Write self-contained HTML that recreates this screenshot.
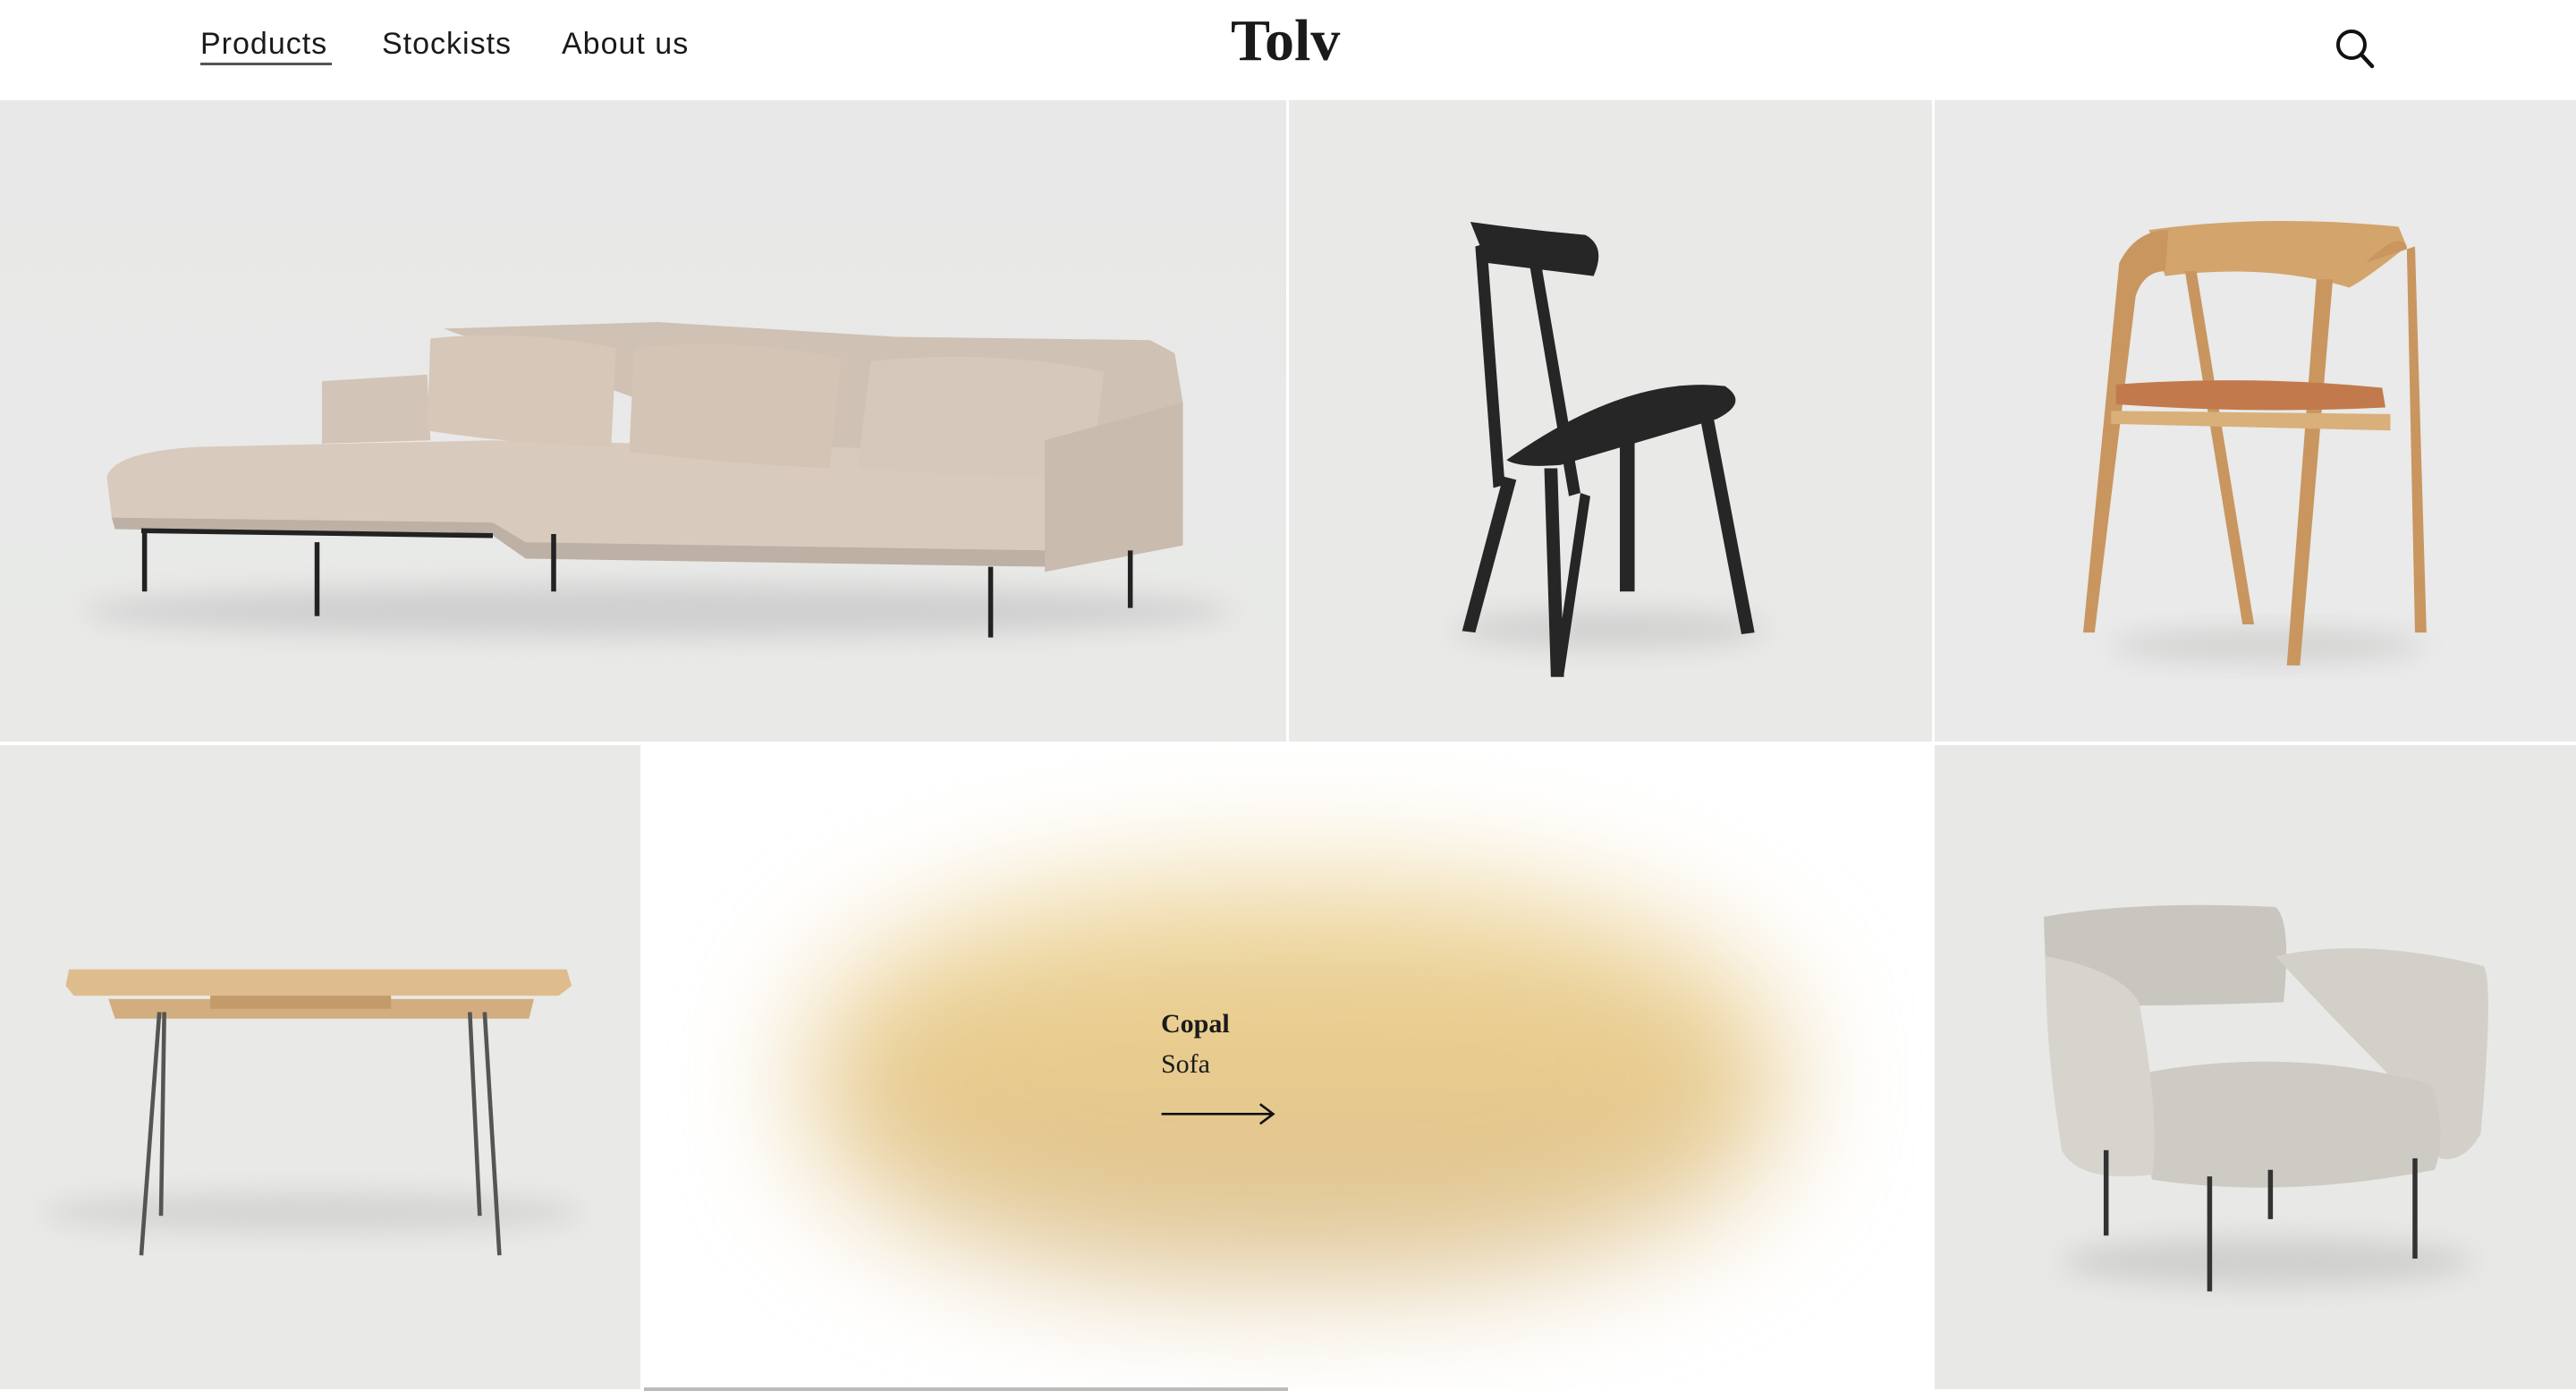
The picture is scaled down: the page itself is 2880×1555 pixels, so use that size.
<!DOCTYPE html>
<html><head><meta charset="utf-8">
<style>
*{margin:0;padding:0;box-sizing:border-box}
html,body{width:2880px;height:1555px;overflow:hidden;background:#fff;font-family:"Liberation Sans",sans-serif}
.hdr{position:absolute;left:0;top:0;width:2880px;height:112px;background:#fff}
.nav{position:absolute;top:30px;font-size:34px;color:#1a1a1a;letter-spacing:1px}
.logo{position:absolute;left:1376px;top:8px;font-family:"Liberation Serif",serif;font-weight:bold;font-size:66px;color:#1a1a1a}
.cell{position:absolute;overflow:hidden}
svg.art{position:absolute;left:0;top:0}
.txt{position:absolute;font-family:"Liberation Serif",serif;color:#1a1a1a}
</style></head><body>
<div class="hdr">
 <div class="nav" style="left:224px">Products</div>
 <div style="position:absolute;left:224px;top:70px;width:147px;height:3px;background:#555"></div>
 <div class="nav" style="left:427px">Stockists</div>
 <div class="nav" style="left:628px">About us</div>
 <div class="logo">Tolv</div>
 <svg style="position:absolute;left:2610px;top:30px" width="46" height="50" viewBox="0 0 46 50"><circle cx="19" cy="20" r="15" fill="none" stroke="#111" stroke-width="4"/><line x1="30" y1="31" x2="42" y2="44" stroke="#111" stroke-width="4.5" stroke-linecap="round"/></svg>
</div>
<div class="cell" style="left:0;top:112px;width:1438px;height:717px;background:linear-gradient(180deg,#e7e8e7,#e9eae8)"></div>
<div class="cell" style="left:1441px;top:112px;width:719px;height:717px;background:#e9e9e8"></div>
<div class="cell" style="left:2163px;top:112px;width:717px;height:717px;background:#e9eae9"></div>
<div class="cell" style="left:0;top:833px;width:716px;height:720px;background:#e9e9e8"></div>
<div class="cell" style="left:717px;top:833px;width:1444px;height:720px;background:#fff">
 <div style="position:absolute;left:190px;top:150px;width:1080px;height:450px;border-radius:45%;background:linear-gradient(180deg,#efd8a0,#e7c98a 50%,#dcc49a);filter:blur(70px)"></div>
</div>
<div class="cell" style="left:2163px;top:833px;width:717px;height:720px;background:#e8e8e7"></div>
<div style="position:absolute;left:720px;top:1551px;width:720px;height:4px;background:#bbb"></div>

<svg class="art" width="2880" height="1555" viewBox="0 0 1568 846.6">
 <defs><filter id="b" x="-50%" y="-50%" width="200%" height="200%"><feGaussianBlur stdDeviation="8"/></filter></defs>
 <ellipse cx="400" cy="372" rx="350" ry="16" fill="#cfd0cf" filter="url(#b)"/>
 <g fill="#d8cabd">
  <path d="M270 200 L400 196 L545 205 L700 207 L715 215 L720 245 L720 330 L640 340 L640 300 L560 305 Z" fill="#cfc1b3"/>
  <path d="M196 232 L260 228 L262 268 L196 270 Z" fill="#d2c4b6"/>
  <path d="M65 290 Q70 275 120 272 L300 268 L640 275 L640 335 L320 330 L300 318 L68 315 Z"/>
  <path d="M68 315 L300 318 L320 330 L640 335 L640 345 L320 340 L300 326 L70 322 Z" fill="#bdb0a4"/>
  <path d="M262 206 Q320 200 375 212 L372 272 Q310 270 260 262 Z" fill="#d6c7b9"/>
  <path d="M386 212 Q450 205 512 218 L505 285 Q440 282 383 275 Z" fill="#d3c4b6"/>
  <path d="M530 220 Q600 212 672 226 L664 292 Q590 290 522 285 Z" fill="#d6c8ba"/>
  <path d="M636 268 L720 245 L720 332 L636 348 Z" fill="#c9bbad"/>
 </g>
 <g stroke="#222" stroke-width="3">
  <line x1="88" y1="322" x2="88" y2="360"/><line x1="193" y1="330" x2="193" y2="375"/>
  <line x1="337" y1="325" x2="337" y2="360"/><line x1="603" y1="345" x2="603" y2="388"/>
  <line x1="688" y1="335" x2="688" y2="370"/><line x1="86" y1="323" x2="300" y2="326"/>
 </g>
 <ellipse cx="980" cy="383" rx="95" ry="12" fill="#d2d2d1" filter="url(#b)"/>
 <g fill="#262626">
  <path d="M895 135 Q930 140 965 143 Q978 150 970 168 L905 160 Z"/>
  <path d="M898 150 L905 148 L916 295 L909 297 Z"/>
  <path d="M930 155 L937 154 L962 300 L955 302 Z"/>
  <path d="M917 280 Q990 228 1050 235 Q1065 245 1045 255 L950 283 Q925 285 917 280 Z"/>
  <path d="M940 285 L948 285 L952 412 L944 412 Z"/>
  <path d="M986 262 L995 262 L995 360 L986 360 Z"/>
  <path d="M1035 255 L1043 254 L1068 385 L1060 386 Z"/>
  <path d="M915 290 L923 292 L898 385 L890 384 Z"/>
  <path d="M962 300 L968 302 L952 410 L946 410 Z"/>
 </g>
 <ellipse cx="1380" cy="393" rx="95" ry="10" fill="#d3d3d2" filter="url(#b)"/>
 <g fill="#c99660">
  <path d="M1308 140 Q1380 130 1460 138 L1465 150 Q1440 170 1430 175 Q1380 160 1318 168 Z" fill="#d3a46c"/>
  <path d="M1290 160 Q1300 140 1320 140 L1318 165 Q1305 165 1300 180 L1275 385 L1268 385 Z"/>
  <path d="M1440 160 Q1460 140 1465 150 L1470 385 L1477 385 L1470 150 Z"/>
  <path d="M1330 165 L1337 165 L1372 380 L1365 380 Z"/>
  <path d="M1410 170 L1420 170 L1400 405 L1392 405 Z"/>
  <path d="M1285 250 L1455 252 L1455 262 L1285 258 Z" fill="#d9b07a"/>
 </g>
 <path d="M1288 234 Q1370 228 1450 236 L1452 248 Q1370 252 1288 246 Z" fill="#c27a4c"/>
 <ellipse cx="190" cy="738" rx="165" ry="12" fill="#d4d4d3" filter="url(#b)"/>
 <path d="M42 590 L345 590 L348 600 L340 606 L45 606 L40 600 Z" fill="#dfbc8e"/>
 <path d="M66 608 L325 608 L322 620 L70 620 Z" fill="#d2ad7f"/>
 <rect x="128" y="606" width="110" height="8" fill="#c49a6a"/>
 <g stroke="#555" stroke-width="2.5">
  <line x1="97" y1="616" x2="86" y2="764"/><line x1="100" y1="616" x2="98" y2="740"/>
  <line x1="286" y1="616" x2="292" y2="740"/><line x1="295" y1="616" x2="304" y2="764"/>
 </g>
 <ellipse cx="1380" cy="768" rx="125" ry="15" fill="#d0d0cf" filter="url(#b)"/>
 <path d="M1244 558 Q1300 548 1385 552 Q1395 560 1390 610 Q1330 612 1300 612 Q1270 600 1245 585 Z" fill="#c8c6be"/>
 <path d="M1385 582 Q1440 570 1512 588 Q1518 600 1510 690 Q1500 708 1485 705 L1460 660 Q1420 620 1385 582 Z" fill="#d2d0c8"/>
 <path d="M1295 655 Q1390 635 1480 660 Q1490 690 1482 712 Q1390 730 1310 718 Z" fill="#cdcbc3"/>
 <path d="M1245 582 Q1290 590 1302 610 Q1315 680 1310 715 Q1265 720 1255 700 Q1245 640 1245 582 Z" fill="#d6d4cd"/>
 <g stroke="#333" stroke-width="3">
  <line x1="1282" y1="700" x2="1282" y2="752"/><line x1="1345" y1="716" x2="1345" y2="786"/>
  <line x1="1382" y1="712" x2="1382" y2="742"/><line x1="1470" y1="705" x2="1470" y2="766"/>
 </g>
 <line x1="707" y1="678" x2="775" y2="678" stroke="#111" stroke-width="1.4"/>
 <polyline points="767,672 775,678 767,684" fill="none" stroke="#111" stroke-width="1.4"/>
</svg>
<div class="txt" style="left:1298px;top:1128px;font-size:30px;font-weight:bold">Copal</div>
<div class="txt" style="left:1298px;top:1173px;font-size:30px">Sofa</div>
</body></html>
